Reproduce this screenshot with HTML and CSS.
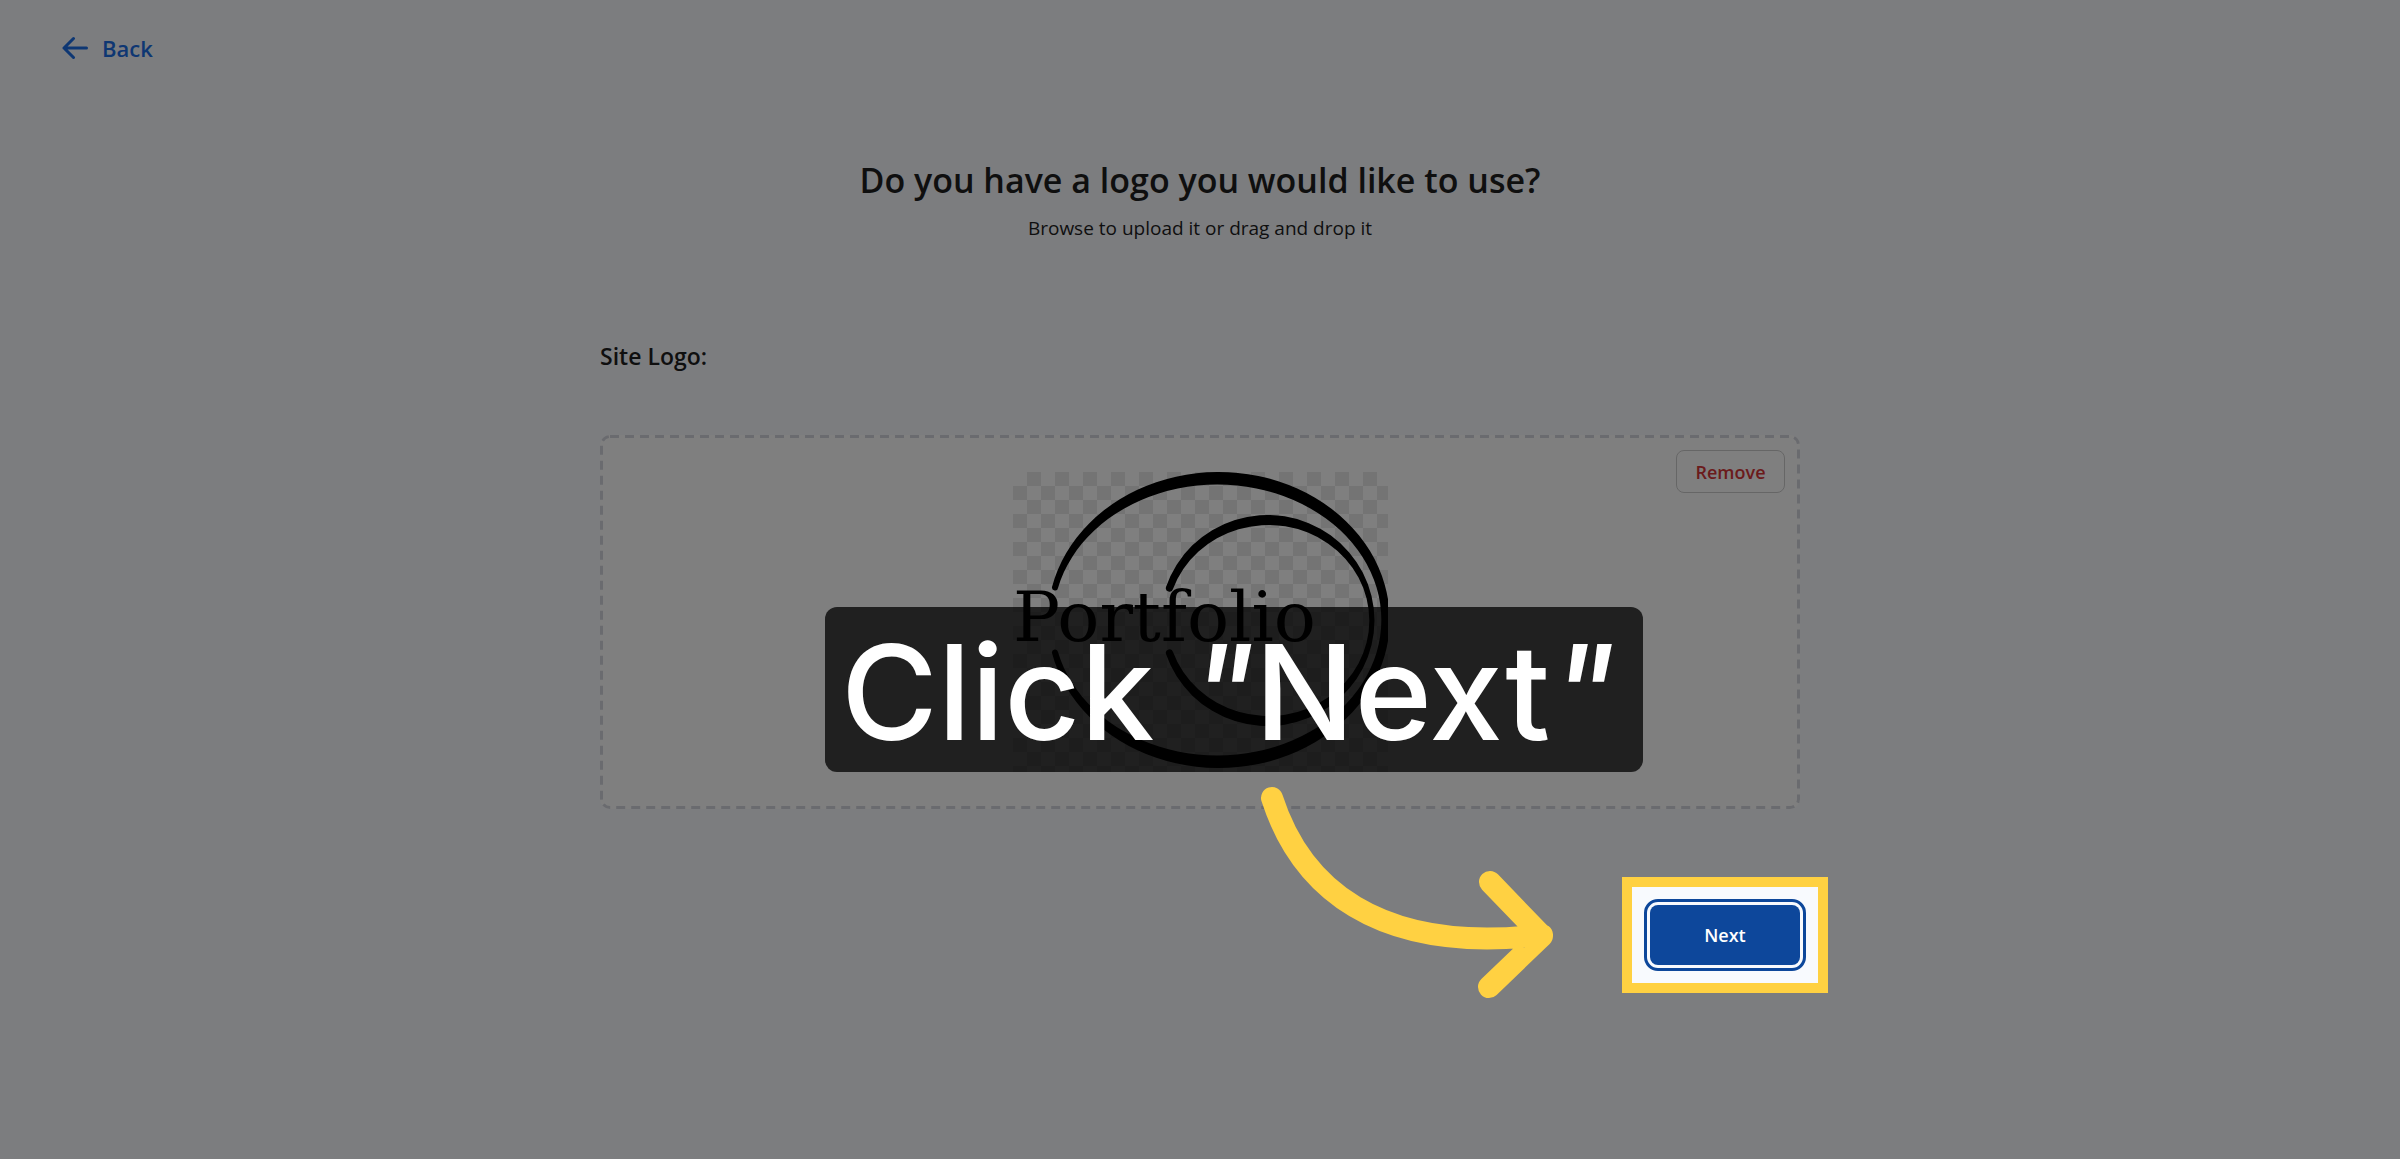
FILE: index.html
```html
<!DOCTYPE html>
<html lang="en">
<head>
  <meta charset="utf-8">
  <meta name="viewport" content="width=device-width, initial-scale=1">
  <title>Site logo</title>
  <link rel="stylesheet" href="styles.css">
</head>
<body>
  <div class="page">
    <header class="topbar">
      <a class="back" href="#">
        <svg class="back-icon" viewBox="0 0 26 24" aria-hidden="true"><path d="M24.500 12H2M11.500 2.500L2 12l9.500 9.500"/></svg>
        Back
      </a>
    </header>
    <main class="content">
      <h1 class="title">Do you have a logo you would like to use?</h1>
      <p class="subtitle">Browse to upload it or drag and drop it</p>
      <h2 class="label">Site Logo:</h2>
      <section class="dropzone">
        <svg class="dashes" aria-hidden="true"><rect width="100%" height="100%" rx="10"/></svg>
        <svg class="logo" viewBox="0 0 375 300" role="img" aria-label="Portfolio logo">
          <defs>
            <pattern id="checker" width="28" height="28" patternUnits="userSpaceOnUse">
              <path d="M14 0h14v14H14zM0 14h14v14H0z" fill="#e8e8e8"/>
            </pattern>
          </defs>
          <rect width="375" height="300" fill="url(#checker)"/>
          <path d="M39 115A171 148 0 1 1 39 181A3 3 0 0 1 45 180A164 135.500 0 1 0 45 116A3 3 0 0 1 39 115Z"/>
          <path d="M153 115A107 105.500 0 1 1 153 182A3.500 3.500 0 0 1 160 180A101 95.500 0 1 0 160 117A3.500 3.500 0 0 1 153 115Z"/>
          <text class="logo-text" x="0" y="169">Portfolio</text>
        </svg>
        <button class="remove" type="button">Remove</button>
      </section>
      <div class="actions">
        <div class="spotlight"><button class="next" type="button">Next</button></div>
      </div>
      <div class="callout">Click <span class="quote">"</span>Next<span class="quote">"</span></div>
      <svg class="pointer" viewBox="1260 786 294 214" aria-hidden="true">
        <path d="M1272 798C1300 885 1375 955 1542 935M1490 882L1542 936L1489 987"/>
      </svg>
    </main>
  </div>
</body>
</html>
```
FILE: styles.css
```css
* {
  box-sizing: border-box;
}

body {
  margin: 0;
  background: #f8fafe;
  color: #1e1e1e;
  font-family: "Open Sans", "Noto Sans", sans-serif;
}

button {
  padding: 0;
  font-family: inherit;
  font-size: 18px;
  font-weight: 600;
  cursor: pointer;
}

.page {
  min-height: 100vh;
  overflow: hidden;
}

.topbar {
  display: flex;
  padding: 32px 62px;
}

.back {
  display: flex;
  align-items: center;
  gap: 14px;
  color: #1c6ee6;
  font-size: 22px;
  font-weight: 600;
  line-height: 32px;
  text-decoration: none;
}

.back-icon {
  width: 26px;
  height: 24px;
  fill: none;
  stroke: currentColor;
  stroke-width: 3;
  stroke-linecap: round;
  stroke-linejoin: round;
}

.content {
  position: relative;
  display: flex;
  flex-direction: column;
  width: 50%;
  min-width: 1000px;
  margin: 0 auto;
  padding-top: 60px;
}

.title {
  margin: 0;
  font-size: 34px;
  font-weight: 600;
  line-height: 48px;
  text-align: center;
}

.subtitle {
  margin: 8px 0 96px;
  font-size: 19px;
  line-height: 32px;
  text-align: center;
}

.label {
  margin: 0 0 63px;
  font-size: 23px;
  font-weight: 600;
  line-height: 32px;
}

.dropzone {
  position: relative;
  display: flex;
  justify-content: center;
  padding: 37px;
  overflow: hidden;
  border-radius: 10px;
  background: #fff;
}

/* Half of the stroke is clipped by the rounded box, leaving 3px */
.dashes {
  position: absolute;
  inset: 0;
  width: 100%;
  height: 100%;
  fill: none;
  stroke: #d4d6de;
  stroke-width: 6;
  stroke-dasharray: 9 6;
}

.logo {
  width: 375px;
  height: 300px;
}

.logo-text {
  font-family: "DejaVu Serif", serif;
  font-size: 70px;
}

.remove {
  position: absolute;
  top: 15px;
  right: 15px;
  width: 109px;
  height: 43px;
  border: 1px solid #ccc;
  border-radius: 8px;
  background: transparent;
  color: #d63638;
}

.actions {
  display: flex;
  justify-content: flex-end;
  margin-top: 96px;
}

.spotlight {
  position: relative;
}

.spotlight::after {
  content: "";
  position: absolute;
  inset: -28px;
  border: 10px solid #ffd142;
  box-shadow: 0 0 0 9999px rgba(0, 0, 0, 0.5);
  pointer-events: none;
}

.next {
  display: block;
  width: 150px;
  height: 60px;
  border: 0;
  border-radius: 8px;
  outline: 3px solid #0d479b;
  outline-offset: 3px;
  background: #0d479b;
  color: #fff;
}

.callout {
  position: absolute;
  top: 511px;
  left: 225px;
  padding: 6px 28px 0 16px;
  border-radius: 12px;
  background: rgba(0, 0, 0, 0.75);
  color: #fff;
  font-family: Inter, sans-serif;
  font-size: 132px;
  font-weight: 500;
  line-height: 159px;
  white-space: nowrap;
}

.quote {
  font-style: italic;
}

.pointer {
  position: absolute;
  top: 690px;
  left: 660px;
  width: 294px;
  height: 214px;
  fill: none;
  stroke: #ffd142;
  stroke-width: 22;
  stroke-linecap: round;
  stroke-linejoin: round;
}
```
